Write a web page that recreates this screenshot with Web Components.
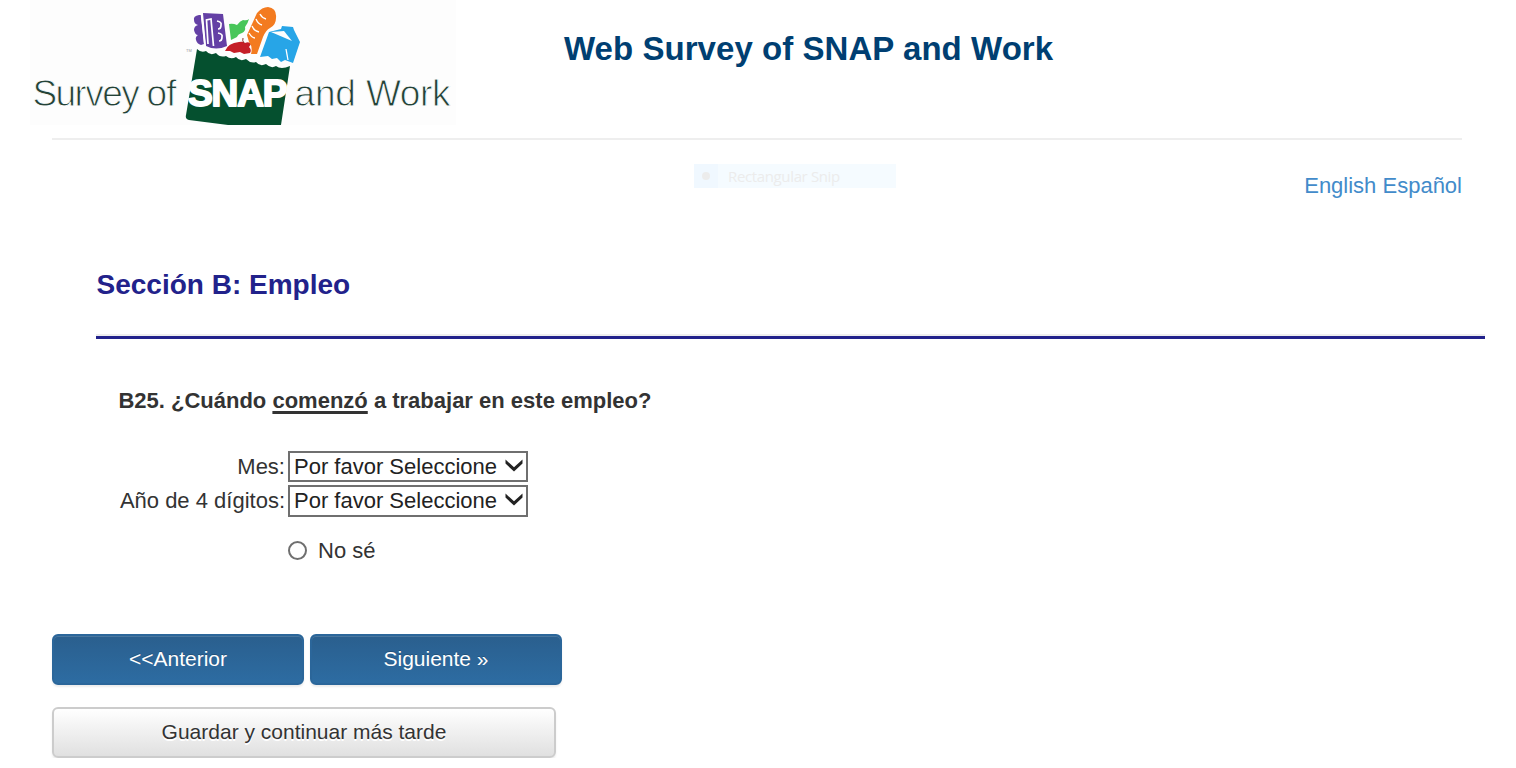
<!DOCTYPE html>
<html lang="es">
<head>
<meta charset="utf-8">
<title>Web Survey of SNAP and Work</title>
<style>
    body {
        margin: 0;
        background: #fff;
        color: #333;
        font-family: "Liberation Sans", Arial, sans-serif;
        font-size: 22px;
        overflow: hidden;
    }
    u {
        text-decoration-thickness: 3px;
        text-underline-offset: 3px;
        text-decoration-skip-ink: none;
    }
</style>
</head>
<body>
<survey-header>Web Survey of SNAP and Work</survey-header>
<survey-languages></survey-languages>
<survey-section>Sección B: Empleo</survey-section>
<survey-question>
    <span slot="titulo">B25. ¿Cuándo <u>comenzó</u> a trabajar en este empleo?</span>
    <survey-select label="Mes:" alto="31">Por favor Seleccione</survey-select>
    <survey-select label="Año de 4 dígitos:" alto="32">Por favor Seleccione</survey-select>
    <survey-radio>No sé</survey-radio>
</survey-question>
<survey-actions>
    <survey-button tipo="primary">&lt;&lt;Anterior</survey-button>
    <survey-button tipo="primary">Siguiente »</survey-button>
    <survey-button tipo="default">Guardar y continuar más tarde</survey-button>
</survey-actions>
<snip-tip>Rectangular Snip</snip-tip>

<script>
class SnapLogo extends HTMLElement {
    constructor() {
        super();
        this.attachShadow({ mode: "open" });
        this.shadowRoot.innerHTML = `
        <style>
            :host {
                display: block;
                width: 426px;
                height: 125px;
                background: #fdfdfd;
            }
            svg { display: block; }
            .thin {
                font: 37px "Liberation Sans", Arial, sans-serif;
                fill: #234237;
                stroke: #fdfdfd;
                stroke-width: .9;
            }
            .snap {
                font: bold 37px "Liberation Sans", Arial, sans-serif;
                letter-spacing: -1.1px;
                fill: #fff;
                stroke: #fff;
                stroke-width: 2;
                stroke-linejoin: round;
            }
            .tm { font: 4px "Liberation Sans", sans-serif; fill: #999; }
        </style>
        <svg width="426" height="125" viewBox="30 0 426 125">
            <!-- bolsa -->
            <path fill="#05502f" d="M197 49 q4 4 9 2 q4 5 10 2 q4 5 10 3 q5 4 10 1 q4 5 10 2 q5 5 10 3 q4 5 10 2 q5 5 10 2 q5 4 14 0 L281 125 L228 125 L189 120 Q185 119 186 115 Z"/>
            <!-- cereal -->
            <path fill="#6440a5" d="M203 13 L223 14 L227 46 Q216 51 206 46 Z"/>
            <path fill="#6440a5" d="M199 15 q-6 1 -5 5 q0 4 4 5 q-4 1 -4 5 q1 5 4 5 q-3 2 -2 5 q1 4 5 5 l3 -1 L201 15 Z"/>
            <path fill="none" stroke="#fff" stroke-width="1.7" d="M201.500 14 L205 46 M208 44 L206.500 20 L211 19 L213.500 46 M217 21 q5 1 4 4 q0 4 -3 4 M218 33 q5 1 4 4 q0 4 -3 4"/>
            <!-- apio -->
            <path fill="#48c65a" d="M229 24 q4 -1 8 1 q3 -4 6 -5 q4 1 6 -1 q-1 4 -4 8 q1 4 -3 6 q-4 1 -5 4 l-6 3 Z"/>
            <!-- manzana -->
            <path fill="#c51e27" d="M225 51 q3 -8 14 -9 q4 -1 6 1 q4 -2 6 1 l-2 3 q3 3 1 6 l-6 1 l-4 -2 l-6 1 l-4 -2 Z"/>
            <path fill="none" stroke="#8b3028" stroke-width="1" d="M244 43 q-2 -2 -1 -5"/>
            <!-- pan -->
            <path fill="#f37b20" d="M247 35 L257 13 Q262 7 268 7 Q277 8 276 18 Q276 25 270 28 Q266 30 263 37 L257 54 L251 54 Q253 47 249 42 Z"/>
            <path fill="none" stroke="#fff" stroke-width="1.4" d="M260 14 q2 4 6 5 M256 19 q2 5 6 6 M252 26 q2 5 7 6 M249 33 q3 5 6 5"/>
            <!-- leche -->
            <path fill="#27a5e7" d="M269 32 L281 29 L282 26 L293 27 L294 30 L300 42 L293 63 L285 60 L281 62 L277 58 L272 59 L268 56 L260 57 Z"/>
            <path fill="#fdfdfd" d="M271 32 L284 31 L292 41 Z"/>
            <path fill="none" stroke="#fff" stroke-width="1.3" d="M286 49 L288 60"/>
            <text class="tm" x="186" y="52">TM</text>
            <text class="thin" x="32.500" y="106" letter-spacing="-1.600">Survey</text>
            <text class="thin" x="146.500" y="106" letter-spacing="-0.800">of</text>
            <text class="snap" x="188" y="106">SNAP</text>
            <text class="thin" x="294.500" y="106" letter-spacing="-0.200">and</text>
            <text class="thin" x="366" y="106" letter-spacing="-0.400">Work</text>
        </svg>
        `;
    }
}
customElements.define("snap-logo", SnapLogo);


class SurveyHeader extends HTMLElement {
    constructor() {
        super();
        this.attachShadow({ mode: "open" });
        this.shadowRoot.innerHTML = `
        <style>
            :host { display: block; }
            .top {
                display: flex;
                align-items: flex-start;
                gap: 108px;
                height: 138px;
                padding-left: 30px;
            }
            h1 {
                margin: 0;
                color: #003f72;
                font-size: 33px;
                letter-spacing: .05px;
                line-height: 97px;
                white-space: nowrap;
            }
            .line { height: 2px; margin: 0 54px 0 52px; background: #eee; }
        </style>
        <div class="top">
            <snap-logo></snap-logo>
            <h1><slot></slot></h1>
        </div>
        <div class="line"></div>
        `;
    }
}
customElements.define("survey-header", SurveyHeader);


class SurveyLanguages extends HTMLElement {
    constructor() {
        super();
        this.attachShadow({ mode: "open" });
        this.shadowRoot.innerHTML = `
        <style>
            :host {
                display: block;
                padding-right: 54px;
                line-height: 91px;
                height: 91px;
                text-align: right;
            }
            a { color: #428bca; text-decoration: none; }
        </style>
        <a href="#en">English</a> <a href="#es">Español</a>
        `;
    }
}
customElements.define("survey-languages", SurveyLanguages);


class SurveySection extends HTMLElement {
    constructor() {
        super();
        this.attachShadow({ mode: "open" });
        this.shadowRoot.innerHTML = `
        <style>
            :host { display: block; margin: 0 31px 0 96px; }
            h2 {
                margin: 0;
                padding: 37px 0 32px .5px;
                font-size: 28px;
                line-height: 34px;
                color: #22228b;
                border-bottom: 2px solid #eee;
            }
            .line { height: 3px; background: #22228b; }
        </style>
        <h2><slot></slot></h2>
        <div class="line"></div>
        `;
    }
}
customElements.define("survey-section", SurveySection);


class SurveyQuestion extends HTMLElement {
    constructor() {
        super();
        this.attachShadow({ mode: "open" });
        this.shadowRoot.innerHTML = `
        <style>
            :host { display: block; height: 245px; padding: 50px 0 0 118px; }
            .titulo {
                padding-left: .4px;
                font-weight: bold;
                line-height: 24px;
                margin-bottom: 38px;
            }
            .campos { display: flex; flex-direction: column; gap: 3px; }
        </style>
        <div class="titulo"><slot name="titulo"></slot></div>
        <div class="campos"><slot></slot></div>
        `;
    }
}
customElements.define("survey-question", SurveyQuestion);


class SurveySelect extends HTMLElement {
    constructor() {
        super();
        this.attachShadow({ mode: "open" });

        const label = this.getAttribute("label") || "";
        const alto = this.getAttribute("alto") || "31";
        this.shadowRoot.innerHTML = `
        <style>
            :host { display: flex; height: ${alto}px; }
            label { width: 167px; margin-right: 3px; text-align: right; line-height: 31px; }
            .caja {
                display: flex;
                justify-content: space-between;
                box-sizing: border-box;
                width: 240px;
                border: 2px solid #6f6f6f;
                padding: 0 3px 0 4px;
                line-height: 27px;
                color: #222;
                white-space: nowrap;
            }
            svg { margin-top: 5px; }
        </style>
        <label>${label}</label>
        <div class="caja" role="combobox" tabindex="0">
            <span><slot></slot></span>
            <svg width="18" height="14" viewBox="0 0 18 14">
                <path fill="#222" d="M0.500 1.500 L9 9.300 L17.500 1.500 L17.500 5.500 L9 13.600 L0.500 5.500 Z"/>
            </svg>
        </div>
        `;
    }
}
customElements.define("survey-select", SurveySelect);


class SurveyRadio extends HTMLElement {
    constructor() {
        super();
        this.attachShadow({ mode: "open" });
        this.shadowRoot.innerHTML = `
        <style>
            :host {
                display: flex;
                align-items: center;
                gap: 11px;
                height: 25px;
                margin: 18px 0 0 170px;
            }
            .circulo {
                box-sizing: border-box;
                width: 19px;
                height: 19px;
                border: 2px solid #6f6f6f;
                border-radius: 50%;
            }
        </style>
        <div class="circulo" role="radio" tabindex="0"></div>
        <span><slot></slot></span>
        `;
    }
}
customElements.define("survey-radio", SurveyRadio);


class SurveyActions extends HTMLElement {
    constructor() {
        super();
        this.attachShadow({ mode: "open" });
        this.shadowRoot.innerHTML = `
        <style>
            :host {
                display: flex;
                flex-wrap: wrap;
                gap: 22px 6px;
                width: 520px;
                padding-left: 52px;
            }
        </style>
        <slot></slot>
        `;
    }
}
customElements.define("survey-actions", SurveyActions);


class SurveyButton extends HTMLElement {
    constructor() {
        super();
        this.attachShadow({ mode: "open" });
        this.shadowRoot.innerHTML = `
        <style>
            :host { display: block; width: 252px; height: 51px; }
            :host([tipo="default"]) { width: 504px; }
            button {
                display: block;
                box-sizing: border-box;
                width: 100%;
                height: 100%;
                padding: 0 0 1px;
                border: 2px solid #2b669a;
                border-radius: 6px;
                background: linear-gradient(#2a5f8e, #2d6ca2);
                box-shadow: inset 0 1px 0 rgba(255, 255, 255, .15), 0 2px 2px rgba(0, 0, 0, .075);
                color: #fff;
                font: 21px "Liberation Sans", Arial, sans-serif;
                text-shadow: 0 -1px 0 rgba(0, 0, 0, .2);
            }
            :host([tipo="default"]) button {
                border-color: #ccc;
                background: linear-gradient(#fff, #e0e0e0);
                color: #333;
                text-shadow: 0 2px 0 #fff;
            }
        </style>
        <button type="button"><slot></slot></button>
        `;
    }
}
customElements.define("survey-button", SurveyButton);


class SnipTip extends HTMLElement {
    constructor() {
        super();
        this.attachShadow({ mode: "open" });
        this.shadowRoot.innerHTML = `
        <style>
            :host {
                position: absolute;
                left: 694px;
                top: 164px;
                display: flex;
                align-items: center;
                width: 202px;
                height: 24px;
                background: #f5fbff;
                color: #ececec;
                font: 15px "Open Sans", "Noto Sans", sans-serif;
                letter-spacing: -.36px;
            }
            .icono {
                display: flex;
                align-items: center;
                justify-content: center;
                width: 24px;
                height: 24px;
                margin-right: 10px;
                background: #f0f8ff;
            }
            .punto { width: 8px; height: 8px; border-radius: 50%; background: #ececec; }
        </style>
        <div class="icono"><div class="punto"></div></div>
        <span><slot></slot></span>
        `;
    }
}
customElements.define("snip-tip", SnipTip);
</script>
</body>
</html>
